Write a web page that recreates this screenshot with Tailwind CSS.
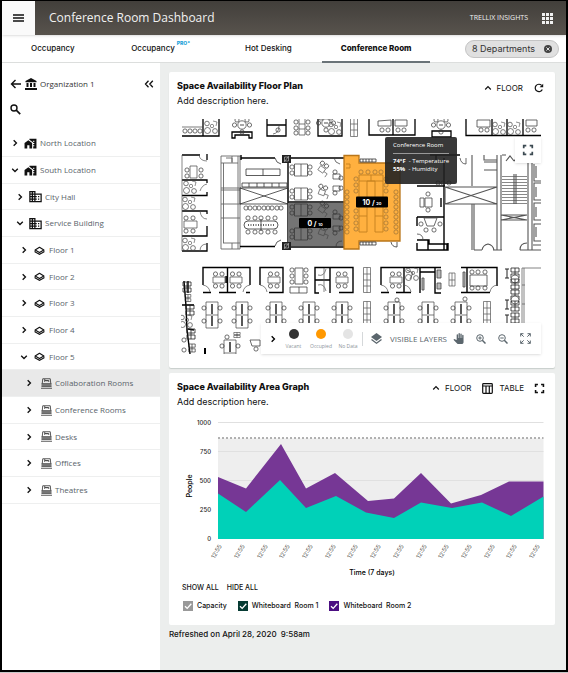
<!DOCTYPE html>
<html lang="en">
<head>
<meta charset="utf-8">
<meta name="viewport" content="width=device-width, initial-scale=1">
<title>Conference Room Dashboard</title>
<script src="https://cdn.jsdelivr.net/npm/@tailwindcss/browser@4"></script>
</head>
<body class="bg-[#c9c9c9] pb-px font-['Inter',sans-serif] text-[8px] text-[#111]">
<svg width="0" height="0" class="absolute" aria-hidden="true">
  <defs>
    <symbol id="i-right" viewBox="0 0 12 12"><path d="M4 1.800 8.200 6 4 10.200" fill="none" stroke="currentColor" stroke-width="2"/></symbol>
    <symbol id="i-down" viewBox="0 0 12 12"><path d="M1.800 4 6 8.200 10.200 4" fill="none" stroke="currentColor" stroke-width="2"/></symbol>
    <symbol id="i-up" viewBox="0 0 12 12"><path d="M1.800 8.200 6 4l4.200 4.200" fill="none" stroke="currentColor" stroke-width="1.800"/></symbol>
    <symbol id="i-location" viewBox="0 0 24 24"><path fill="currentColor" d="M1 11v10h5v-6h4v6h5V11L8 6z"/><path fill="currentColor" d="M10 3v1.970l7 5V11h2v2h-2v2h2v2h-2v4h6V3H10zm9 6h-2V7h2v2z"/></symbol>
    <symbol id="i-building" viewBox="0 0 24 24"><path fill="currentColor" d="M12 7V3H2v18h20V7H12zM6 19H4v-2h2v2zm0-4H4v-2h2v2zm0-4H4V9h2v2zm0-4H4V5h2v2zm4 12H8v-2h2v2zm0-4H8v-2h2v2zm0-4H8V9h2v2zm0-4H8V5h2v2zm10 12h-8v-2h2v-2h-2v-2h2v-2h-2V9h8v10zm-2-8h-2v2h2v-2zm0 4h-2v2h2v-2z"/></symbol>
    <symbol id="i-floor" viewBox="0 0 20 16"><path d="M10 2 18 7 10 11.500 2 7z" fill="none" stroke="currentColor" stroke-width="2" stroke-linejoin="round"/><path d="M2 8v2.500l8 4.500 8-4.500V8" fill="none" stroke="currentColor" stroke-width="2"/></symbol>
    <symbol id="i-room" viewBox="0 0 22 22"><path d="M2.500 11 3.500 1.500h15l1 9.500M7.500 2v6M7.500 5h8v3M12 5v2" fill="none" stroke="#222" stroke-width="1.500"/><path d="M1 11.500h20V17H1z" fill="#8a8a8a"/><path d="M1 11.500h20M1 16.500h20M0 20.500h22" stroke="#222" stroke-width="1.500"/></symbol>
    <symbol id="i-expand" viewBox="0 0 14 14"><path d="M2 5V2h3M9 2h3v3M12 9v3H9M5 12H2V9" fill="none" stroke="currentColor" stroke-width="2"/></symbol>
  </defs>
</svg>

<div class="flex min-h-[calc(100vh-1px)] flex-col border-2 border-t border-black bg-white">
  <header class="relative z-10 flex h-[34px] items-center bg-linear-to-b from-[#423f3b] to-[#58534d] font-['Open_Sans',sans-serif] text-[#f1f1f1] shadow">
    <button class="grid h-[34px] w-[33px] place-items-center bg-[#fafafa] text-[#111]" aria-label="Menu">
      <svg class="h-2 w-[11px]" viewBox="0 0 11 8"><path d="M0 1h11M0 4h11M0 7h11" stroke="currentColor" stroke-width="1.400"/></svg>
    </button>
    <h1 class="ml-[14px] text-[12px] font-medium">Conference Room Dashboard</h1>
    <span class="ml-auto text-[7px] font-medium">TRELLIX INSIGHTS</span>
    <button class="ml-[14px] mr-[13px]" aria-label="Apps">
      <svg class="size-[11px]" viewBox="0 0 11 11" fill="currentColor"><path d="M0 0h3v3H0zM4 0h3v3H4zM8 0h3v3H8zM0 4h3v3H0zM4 4h3v3H4zM8 4h3v3H8zM0 8h3v3H0zM4 8h3v3H4zM8 8h3v3H8z"/></svg>
    </button>
  </header>

  <div class="flex h-7 items-center justify-between border-b border-[#dcdedd] pr-[7px]">
    <nav class="-ml-[3px] flex h-7 w-[431px] text-[8px] font-medium">
      <a href="#" class="flex flex-1 items-center justify-center pb-[2px]">Occupancy</a>
      <a href="#" class="flex flex-1 items-center justify-center gap-[2px] pb-[2px]">Occupancy<sup class="mb-1 text-[5px] font-extrabold text-[#1b9fd8]">PRO*</sup></a>
      <a href="#" class="flex flex-1 items-center justify-center pb-[2px]">Hot Desking</a>
      <a href="#" class="flex flex-1 items-center justify-center border-b-2 border-[#6a7378] font-extrabold" aria-current="page">Conference Room</a>
    </nav>
    <button class="flex h-[18px] w-[94px] items-center justify-between rounded-full border border-[#c4c4c4] bg-[#e0e0e0] px-[6px] text-[9px] text-[#333]">8 Departments
      <svg class="size-2" viewBox="0 0 8 8"><circle cx="4" cy="4" r="4" fill="#444"/><path d="m2.400 2.400 3.200 3.200M5.600 2.400 2.400 5.600" stroke="#e0e0e0"/></svg>
    </button>
  </div>

  <div class="flex flex-1">
    <aside class="w-[158px] shrink-0 font-['Open_Sans',sans-serif] text-[#59636a]">
      <div class="flex h-[41px] items-center pl-2 pr-[6px] text-[#111]">
        <button aria-label="Back"><svg class="h-[10px] w-[11px]" viewBox="0 0 11 10"><path d="M11 5H1.500M5.500 1l-4 4 4 4" fill="none" stroke="currentColor" stroke-width="1.400"/></svg></button>
        <svg class="ml-1 h-3 w-3" viewBox="0 0 12 12" fill="currentColor"><path d="M6 0 .5 3v1.200h11V3zM1.500 5h2v4h-2zM5 5h2v4H5zM8.500 5h2v4h-2zM0 10h12v2H0z"/></svg>
        <span class="ml-[3px] text-[8px] text-[#333]">Organization 1</span>
        <button class="ml-auto" aria-label="Collapse"><svg class="h-2 w-[10px]" viewBox="0 0 10 8"><path d="M4.500.8 1.500 4l3 3.200M8.800.8l-3 3.200 3 3.200" fill="none" stroke="currentColor" stroke-width="1.300"/></svg></button>
      </div>
      <div class="flex h-[26px] items-start pl-2 text-[#111]">
        <button aria-label="Search"><svg class="size-[11px]" viewBox="0 0 11 11"><circle cx="4" cy="4" r="3" fill="none" stroke="currentColor" stroke-width="1.400"/><path d="m6.200 6.200 4 4" stroke="currentColor" stroke-width="1.700"/></svg></button>
      </div>
      <ul class="[&>li]:h-[27px] [&>li:nth-child(3n)]:h-[26px] [&>li]:border-b [&>li]:border-[#eeefef] [&_button]:flex [&_button]:size-full [&_button]:items-center [&_svg]:text-[#111]">
        <li><button class="pl-[9px]"><svg class="size-2"><use href="#i-right"/></svg><svg class="ml-[5px] mr-[3px] size-[13px]"><use href="#i-location"/></svg>North Location</button></li>
        <li><button class="pl-[9px]"><svg class="size-2"><use href="#i-down"/></svg><svg class="ml-[5px] mr-[3px] size-[13px]"><use href="#i-location"/></svg>South Location</button></li>
        <li><button class="pl-[14px]"><svg class="size-2"><use href="#i-right"/></svg><svg class="ml-1 mr-[2px] size-[15px]"><use href="#i-building"/></svg>City Hall</button></li>
        <li><button class="pl-[14px]"><svg class="size-2"><use href="#i-down"/></svg><svg class="ml-1 mr-[2px] size-[15px]"><use href="#i-building"/></svg>Service Building</button></li>
        <li><button class="pl-[18px]"><svg class="size-2"><use href="#i-right"/></svg><svg class="ml-[6px] mr-1 h-[9px] w-[11px]"><use href="#i-floor"/></svg>Floor 1</button></li>
        <li><button class="pl-[18px]"><svg class="size-2"><use href="#i-right"/></svg><svg class="ml-[6px] mr-1 h-[9px] w-[11px]"><use href="#i-floor"/></svg>Floor 2</button></li>
        <li><button class="pl-[18px]"><svg class="size-2"><use href="#i-right"/></svg><svg class="ml-[6px] mr-1 h-[9px] w-[11px]"><use href="#i-floor"/></svg>Floor 3</button></li>
        <li><button class="pl-[18px]"><svg class="size-2"><use href="#i-right"/></svg><svg class="ml-[6px] mr-1 h-[9px] w-[11px]"><use href="#i-floor"/></svg>Floor 4</button></li>
        <li><button class="pl-[18px]"><svg class="size-2"><use href="#i-down"/></svg><svg class="ml-[6px] mr-1 h-[9px] w-[11px]"><use href="#i-floor"/></svg>Floor 5</button></li>
        <li class="bg-[#e9e9e9]"><button class="pl-[23px]"><svg class="size-2"><use href="#i-right"/></svg><svg class="ml-[8px] mr-[3px] size-[11px]"><use href="#i-room"/></svg>Collaboration Rooms</button></li>
        <li><button class="pl-[23px]"><svg class="size-2"><use href="#i-right"/></svg><svg class="ml-[8px] mr-[3px] size-[11px]"><use href="#i-room"/></svg>Conference Rooms</button></li>
        <li><button class="pl-[23px]"><svg class="size-2"><use href="#i-right"/></svg><svg class="ml-[8px] mr-[3px] size-[11px]"><use href="#i-room"/></svg>Desks</button></li>
        <li><button class="pl-[23px]"><svg class="size-2"><use href="#i-right"/></svg><svg class="ml-[8px] mr-[3px] size-[11px]"><use href="#i-room"/></svg>Offices</button></li>
        <li><button class="pl-[23px]"><svg class="size-2"><use href="#i-right"/></svg><svg class="ml-[8px] mr-[3px] size-[11px]"><use href="#i-room"/></svg>Theatres</button></li>
      </ul>
    </aside>

    <main class="min-w-0 flex-1 bg-[#eceeed] pl-[9px] pr-[11px] pt-[9px]">
      <section class="rounded-[2px] bg-white pb-[14px] pt-2 shadow-[0_1px_1px_#c8cecb]">
        <div class="flex items-start justify-between px-2">
          <div>
            <h2 class="text-[9px] leading-3 font-extrabold">Space Availability Floor Plan</h2>
            <p class="mt-[3px] text-[9px] leading-3">Add description here.</p>
          </div>
          <div class="flex h-4 items-center text-[8px]">
            <button class="flex items-center gap-[5px]"><svg class="size-2"><use href="#i-up"/></svg>FLOOR</button>
            <button class="ml-[11px] mr-[3px]" aria-label="Refresh"><svg class="size-[10px]" viewBox="0 0 10 10"><path d="M8.300 6.500A3.700 3.700 0 1 1 7.600 2.400" fill="none" stroke="currentColor" stroke-width="1.200"/><path d="M9.200.7v3.600H5.600z" fill="currentColor"/></svg></button>
          </div>
        </div>

        <div class="relative ml-3 mr-[14px] mt-3">
          <svg class="block w-full" viewBox="181 119 360 235" role="img" aria-label="Floor plan">
            <defs>
              <circle id="c" r="2.100" fill="none" stroke="#333" stroke-width=".7"/>
              <g id="pod"><path d="M-6-13H6V13H-6zM-6 0H6" fill="none" stroke="#444" stroke-width=".7"/><path d="M0-11V-1M0 1V11" stroke="#000" stroke-width="1.300"/><use href="#c" x="-8" y="-7"/><use href="#c" x="8" y="-7"/><use href="#c" x="-8" y="6"/><use href="#c" x="8" y="6"/></g>
              <g id="meet"><path d="M-6-3H6V3H-6z" fill="none" stroke="#444" stroke-width=".7"/><use href="#c" x="-3.500" y="-6"/><use href="#c" x="3" y="-6"/><use href="#c" x="-3.500" y="6"/><use href="#c" x="3" y="6"/></g>
              <g id="four"><path d="M-6.500-6H6.500V6H-6.500zM0-6V6" fill="none" stroke="#333" stroke-width=".7"/><use href="#c" x="-9" y="-3"/><use href="#c" x="9" y="-3"/><use href="#c" x="-9" y="3"/><use href="#c" x="9" y="3"/></g>
              <g id="round"><circle r="4.200" fill="none" stroke="#333" stroke-width=".7"/><path d="M-2 0H2" stroke="#222" stroke-width=".8"/><use href="#c" x="-7.500"/><use href="#c" x="7.500"/><use href="#c" x="-5" y="-5"/><use href="#c" x="5" y="-5"/><use href="#c" y="7"/></g>
              <g id="lounge"><circle cx="-3.500" cy="3.500" r="3" fill="none" stroke="#444" stroke-width=".7"/><circle cx="4" cy="4" r="2.400" fill="none" stroke="#444" stroke-width=".7"/><circle cx="-4" cy="-3.500" r="2.300" fill="none" stroke="#444" stroke-width=".7"/><circle cx="1" cy="-1" r="1.700" fill="none" stroke="#444" stroke-width=".6"/><path d="m2-6 4 1-1 4" fill="none" stroke="#444" stroke-width=".6"/></g>
              <g id="rack"><path d="M-3.500-12.500H3.500V12.500H-3.500zM0-12.500V12.500M-3.500-6H3.500M-3.500 0H3.500M-3.500 6H3.500" fill="none" stroke="#555" stroke-width=".7"/></g>
              <g id="solo"><path d="M-3-2H3V3H-3zM3 1H7V5" fill="none" stroke="#444" stroke-width=".6"/><use href="#c" x="-3" y="-5"/><use href="#c" x="2" y="-5"/></g>
              <g id="work"><use href="#four" x="301" y="170"/><use href="#four" x="301" y="194"/><use href="#solo" transform="translate(322 169) rotate(35)"/><use href="#solo" transform="translate(322 192) rotate(20)"/><path d="M333 174h7v5h-7zM333 186h7v5h-7z" fill="none" stroke="#333" stroke-width=".7"/><use href="#c" x="335" y="172"/><use href="#c" x="341" y="178"/><use href="#c" x="341" y="188"/><use href="#c" x="335" y="193"/></g>
              <g id="booth"><path d="M-4-5H4V-1H-4zM-4 1H4V5H-4zM0-5V5" fill="none" stroke="#222" stroke-width=".8"/></g>
              <g id="col"><path d="M0 0h9v8H0z" fill="#222"/><path d="M2.500 2h4v4h-4zM2 7l5-6" fill="none" stroke="#ccc" stroke-width=".6"/></g>
            </defs>

            <!-- north offices -->
            <g fill="none" stroke="#000" stroke-width="1.300">
              <path d="M182 136h37V119M203 119v17M232 138v-6h20v6h-3v-3h-14v3zM267 119v17h19V119M267 125h19M318 119v17h24V119M369 119v16h46V119M393 119v16M432 137v-6h19v6zM466 119v16.500h75M492 119v16M507 119v16M523 119v16"/>
              <path d="M182 127h21M273 134q6-1 6-8" stroke="#444" stroke-width=".7"/>
            </g>
            <use href="#c" x="185" y="131"/><use href="#c" x="190" y="131"/><use href="#c" x="195" y="131"/><use href="#c" x="200" y="131"/>
            <use href="#lounge" x="211" y="127"/><use href="#round" x="242" y="125"/><use href="#c" x="278" y="130"/>
            <path d="M299 119v16h6v-16M299 124h6M299 129h6" fill="none" stroke="#444" stroke-width=".7"/>
            <use href="#c" x="296" y="122"/><use href="#c" x="296" y="128"/><use href="#c" x="296" y="133"/><use href="#c" x="308" y="122"/><use href="#c" x="308" y="128"/><use href="#c" x="308" y="133"/>
            <use href="#round" x="326" y="123"/><use href="#lounge" x="335" y="128"/><use href="#rack" x="354" y="124"/>
            <g fill="none" stroke="#444" stroke-width=".8"><path d="M378 121l13-1v6h-13zM395 120h12v6h-12zM477 120h13v7h-13zM526 120h11v6h-11z"/></g>
            <use href="#c" x="382" y="130"/><use href="#c" x="388" y="130"/><use href="#c" x="398" y="130"/><use href="#c" x="404" y="130"/><use href="#c" x="481" y="130"/><use href="#c" x="487" y="130"/><use href="#c" x="528" y="130"/><use href="#c" x="534" y="130"/>
            <use href="#round" x="441" y="125"/><use href="#lounge" x="499" y="128"/><use href="#lounge" x="514" y="128"/>

            <!-- west offices -->
            <g fill="none" stroke="#000" stroke-width="1.300">
              <path d="M182 155h18M207 154v6M182 180h25v3M207 192v3.500h-25M182 211h25v3M207 226v10h-25M182 251h25v-8"/>
              <path d="M182 155v96M199 155q1 6 8 6M200 191q2-6 7-7M200 211q1 8 7 8M200 251q0-7 7-7" stroke="#555" stroke-width=".7"/>
            </g>
            <path d="M190 166h7v12h-7zM184 221h13v7h-13z" fill="none" stroke="#444" stroke-width=".7"/>
            <use href="#c" x="187" y="170"/><use href="#c" x="187" y="176"/><use href="#c" x="201" y="170"/><use href="#c" x="201" y="176"/>
            <use href="#lounge" x="190" y="187"/><use href="#lounge" x="189" y="203"/><use href="#lounge" x="189" y="244"/>
            <use href="#c" x="186" y="218"/><use href="#c" x="193" y="218"/><use href="#c" x="186" y="231"/><use href="#c" x="193" y="231"/>

            <!-- west core -->
            <g fill="none" stroke="#666" stroke-width=".9"><path d="M221 156h19v93h-19M221 156v93M223.500 163v80M238 156v93M221 163h17M221 188h19M221 190h19M221 204h19M221 218h19M223 243h17M232 156v7M232 243v6M226 158h6v4"/></g>

            <!-- training room -->
            <g fill="none" stroke="#000" stroke-width="1.400"><path d="M241 155v5M241 158h34M240 246.500h35M288 158h56M288 158v89M288 202h56M288 247h56"/></g>
            <g fill="none" stroke="#333" stroke-width=".8"><path d="M246 169h34v6.500h-34zM263 169v6.500M242 183h45v4h-45zM249 183v4M257 183v4M264 183v4M272 183v4M279 183v4M240 188h48v16h-48zM240 188l48 16M240 204l48-16M275 158q1 5 6 6M275 246q1-5 6-6"/><rect x="244" y="221" width="34" height="8" rx="4"/><path d="M248 225h26" stroke-dasharray="1 1.500" stroke-width="1.500"/><path d="M261 219v12"/></g>
            <use href="#c" x="246" y="208"/><use href="#c" x="250" y="208"/><use href="#c" x="255" y="208"/><use href="#c" x="259" y="208"/><use href="#c" x="264" y="208"/><use href="#c" x="268" y="208"/><use href="#c" x="272" y="208"/><use href="#c" x="277" y="208"/><use href="#c" x="281" y="208"/>
            <use href="#c" x="248" y="218"/><use href="#c" x="255" y="218"/><use href="#c" x="261" y="218"/><use href="#c" x="268" y="218"/><use href="#c" x="275" y="218"/><use href="#c" x="248" y="232"/><use href="#c" x="255" y="232"/><use href="#c" x="261" y="232"/><use href="#c" x="268" y="232"/><use href="#c" x="275" y="232"/>

            <!-- collaboration rooms -->
            <path d="M288 203h56v43h-56z" fill="#747474"/>
            <use href="#work"/><use href="#work" y="40"/>
            <use href="#col" x="282" y="155"/><use href="#col" x="282" y="242"/>
            <path d="M334 158q1 5 6 6M336 247q0-6 6-6" fill="none" stroke="#333" stroke-width=".7"/>

            <!-- occupied room -->
            <path d="M344 155.500h15v7.500h41v78h-41v8h-15z" fill="#ffb03f" stroke="#b9761a" stroke-width="1.300"/>
            <path d="M360 159h16v3h-16zM363 159v3M366 159v3M369 159v3M372 159v3M360 242h16v3h-16zM363 242v3M366 242v3M369 242v3M372 242v3M391 242q1 5 6 5v-5" fill="none" stroke="#333" stroke-width=".8"/>
            <g opacity=".5">
              <path d="M359 175h24v57h-8v-51h-8v51h-8zM371 175v6M359 181h24M359 198h8M359 216h8M375 198h8M375 216h8M346 164h4v4h-4" fill="none" stroke="#8a5200" stroke-width=".9"/>
              <use href="#c" x="361" y="172"/><use href="#c" x="368" y="172"/><use href="#c" x="375" y="172"/><use href="#c" x="381" y="172"/>
              <use href="#c" x="356" y="179"/><use href="#c" x="356" y="185"/><use href="#c" x="356" y="191"/><use href="#c" x="356" y="211"/><use href="#c" x="356" y="217"/><use href="#c" x="356" y="223"/><use href="#c" x="356" y="229"/>
              <use href="#c" x="386" y="179"/><use href="#c" x="386" y="185"/><use href="#c" x="386" y="191"/><use href="#c" x="386" y="211"/><use href="#c" x="386" y="217"/><use href="#c" x="386" y="223"/><use href="#c" x="386" y="229"/>
              <use href="#c" x="347" y="192"/><use href="#c" x="347" y="197"/><use href="#c" x="347" y="202"/><use href="#c" x="347" y="207"/><use href="#c" x="347" y="212"/><use href="#c" x="347" y="217"/><use href="#c" x="347" y="222"/><use href="#c" x="347" y="227"/><use href="#c" x="347" y="232"/>
              <use href="#c" x="396" y="192"/><use href="#c" x="396" y="197"/><use href="#c" x="396" y="202"/><use href="#c" x="396" y="207"/><use href="#c" x="396" y="212"/><use href="#c" x="396" y="217"/><use href="#c" x="396" y="222"/><use href="#c" x="396" y="227"/><use href="#c" x="396" y="232"/>
            </g>
            <g fill="#000"><rect x="299" y="218" width="32" height="10" rx="1"/><rect x="356" y="196.500" width="32" height="11" rx="1"/></g>
            <g fill="#fff" font-weight="700" font-size="7" text-anchor="middle"><text x="315" y="225.500">0 / <tspan font-size="4">10</tspan></text><text x="372" y="204.500">10 / <tspan font-size="4">20</tspan></text></g>

            <!-- east offices -->
            <g fill="none" stroke="#000" stroke-width="1.400"><path d="M417 186h28M444 158v92M417 217h27M417 217v9M417 243v7h30v-6h-18v-4h-12M428 240v10M448 243v7h-4M430 155h30M436 155v7M441 198v9"/></g>
            <g fill="none" stroke="#444" stroke-width=".8"><path d="M425 198h7v9h-7zM420 198h4v9h-4zM424 218h13l-3 8h-7zM417 234q6 0 6 6M460 158q1 6 6 6v-6"/></g>
            <use href="#c" x="428" y="194"/><use href="#c" x="428" y="210"/><use href="#c" x="421" y="224"/><use href="#c" x="440" y="224"/><use href="#c" x="426" y="230"/><use href="#c" x="434" y="230"/><use href="#c" x="438" y="183"/><use href="#c" x="443" y="183"/><use href="#c" x="449" y="183"/>

            <!-- east core -->
            <g fill="none" stroke="#555" stroke-width="1.100">
              <path d="M445 187h52v17h-52zM445 187l52 17M445 204l52-17M472 155v31M472 204v46M474 204v46M474 250h8M493 250h9M497 155v95M501 155v95M484 155v5h13M484 162h13M484 170h13M482 250q1-5 6-6 5 1 6 6M502 155h4M506 161l4-5 4 5M514 161l5-5M501 215h26M501 220h26M501 215l26 5M501 220l26-5M514 174v30M516 174v30M528 160v90M532 160v90M520 250h21M520 250q0-7 7-7"/>
              <path d="M502 176.500h25M502 179.500h25M502 182.500h25M502 185.500h25M502 188.500h25M502 191.500h25M502 194.500h25M502 197.500h25M502 200.500h25M502 203.500h25" stroke-width=".7"/>
              <path d="M541 181h-7v-17M541 183h-7v17h7M541 203h-7v17h7M541 224h-7v17h7M541 245h-8M536 166v12M536 187v10M536 207v10M536 227v10"/>
            </g>

            <!-- south offices -->
            <g fill="none" stroke="#000" stroke-width="1.400">
              <path d="M203 285v-17.500h47V285M227.500 267v26M203 292.500h8M219 292.500h17M246 292.500h4M260 285V267.500h23v25h-14M315 285V267.500h38v25h-14M330 267v26M315 280h15M315 285v8h4M381 285v-17.500h60M404 267v26M381 292.500h8M396 292.500h15M420 267v26M420 272h15M435 267v26h6M461 267.500h36V286M467 267v26M461 292.500h29M226 276v7"/>
              <path d="M203 285q6 1 7 7M250 285q-6 1-7 7M260 285q6 1 7 7M381 285q6 1 7 7M497 285q-6 1-7 7M404 285q6 1 7 7M318 285q6-2 8 6M318 275q6 2 8-6M324 268v12M324 280v12" stroke="#555" stroke-width=".7"/>
            </g>
            <use href="#meet" x="219" y="280"/><use href="#meet" x="236" y="280"/><use href="#meet" x="274" y="280"/><use href="#meet" x="342" y="280"/><use href="#meet" x="396" y="280"/>
            <path d="M295 268h8v16h-8zM290 287h17v6h-17zM299 287v6M470 275h17v11h-17zM407 270l6 3-3 6" fill="none" stroke="#444" stroke-width=".8"/>
            <use href="#c" x="292" y="270"/><use href="#c" x="292" y="276"/><use href="#c" x="292" y="282"/><use href="#c" x="306" y="270"/><use href="#c" x="306" y="276"/><use href="#c" x="306" y="282"/>
            <use href="#c" x="472" y="272"/><use href="#c" x="478" y="272"/><use href="#c" x="485" y="272"/><use href="#c" x="472" y="288"/><use href="#c" x="478" y="288"/><use href="#c" x="485" y="288"/>
            <use href="#lounge" x="412" y="274"/><use href="#rack" x="367" y="280"/><path d="M449 273h6v13h-6zM452 273v13M449 280h6" fill="none" stroke="#555" stroke-width=".7"/>
            <path d="M437 270h4v8h-4zM437 283h4v6h-4zM422 278h2v12h-2zM463 272h2v15h-2z" fill="#bbb" stroke="#444" stroke-width=".8"/>

            <!-- south desks -->
            <use href="#pod" x="212" y="315"/><use href="#pod" x="242" y="315"/><use href="#pod" x="276" y="315"/><use href="#pod" x="309" y="315"/><use href="#pod" x="342" y="315"/><use href="#pod" x="394" y="315"/><use href="#pod" x="428" y="315"/><use href="#pod" x="461" y="315"/>
            <use href="#rack" x="367" y="314"/><use href="#rack" x="487" y="314"/><use href="#c" x="397" y="300"/><use href="#c" x="465" y="299"/>
            <use href="#pod" x="230" y="353"/><use href="#c" x="227" y="337"/><use href="#booth" transform="translate(237 335) scale(.8 .5)"/><path d="M205 348v6" stroke="#000" stroke-width="2"/><path d="M250 340h10v6h-8z" fill="none" stroke="#444" stroke-width=".8"/><use href="#c" x="256" y="349"/>

            <!-- east booths -->
            <use href="#booth" x="515" y="273"/><circle cx="515" cy="279" r="4" fill="#fff" stroke="#555" stroke-width=".8"/><use href="#booth" x="515" y="284"/><use href="#booth" x="515" y="295"/><circle cx="515" cy="300" r="4" fill="#fff" stroke="#555" stroke-width=".8"/><use href="#booth" x="515" y="306"/><use href="#booth" x="515" y="318"/>
            <path d="M505 269h4M507 269v9M505 278h4M505 300h4M507 300v9M505 309h4M505 315h4M507 315v8" stroke="#222" fill="none"/><path d="M541 268h-19v55M524 268v55M522 285h3M522 304h3" fill="none" stroke="#666" stroke-width=".8"/>

            <!-- west lounge -->
            <path d="M184 281l2 25 1 24 3 24M188 281v12M182 305h12M188 329l6 1" stroke="#000" stroke-width="1.400" fill="none"/>
            <use href="#booth" x="187" y="287"/><use href="#booth" transform="translate(188 298) scale(.7)"/><use href="#booth" x="190" y="310"/><use href="#lounge" x="186" y="321"/><use href="#booth" x="191" y="334"/><use href="#booth" transform="translate(192 348) scale(.8)"/><use href="#c" x="184" y="340"/><use href="#c" x="184" y="350"/>
          </svg>

          <div class="absolute left-[204px] top-[18px] w-[72px] rounded-[2px] bg-[#222]/90 px-2 pb-[11px] pt-1 font-['Open_Sans',sans-serif] text-[6px] leading-[8px] text-white" role="tooltip">
            <p class="border-b border-[#999] pb-1 whitespace-nowrap">Conference Room</p>
            <p class="pt-[3px] whitespace-nowrap"><b>74°F</b>&nbsp; - Temperature</p>
            <p class="whitespace-nowrap"><b>55%</b>&nbsp; - Humidity</p>
          </div>
          <button class="absolute right-0 top-[18px] grid size-[26px] place-items-center bg-white text-[#3c4a52] shadow" aria-label="Full screen"><svg class="size-3"><use href="#i-expand"/></svg></button>

          <div class="absolute bottom-0 right-0 flex h-[31px] w-[280px] items-center bg-white pl-2 pr-[10px] font-['Open_Sans',sans-serif] text-[#5b666d] shadow">
            <button class="text-black" aria-label="Collapse legend"><svg class="size-2"><use href="#i-right"/></svg></button>
            <ul class="ml-2 flex text-[5px] leading-[6px] text-[#8b9398]">
              <li class="flex w-[17px] flex-col items-center gap-1"><span class="size-[10px] rounded-full bg-[#333]"></span>Vacant</li>
              <li class="flex w-[38px] flex-col items-center gap-1"><span class="size-[10px] rounded-full bg-[#ff9800]"></span>Occupied</li>
              <li class="flex w-[16px] flex-col items-center gap-1 whitespace-nowrap"><span class="size-[10px] rounded-full bg-[#e4e4e4]"></span>No Data</li>
            </ul>
            <span class="ml-auto h-[14px] w-px bg-[#d5d8da]"></span>
            <button class="ml-2 flex items-center gap-2 whitespace-nowrap text-[8px]"><svg class="size-[11px]" viewBox="0 0 11 11"><path d="M5.500 0 11 4 5.500 8 0 4z" fill="currentColor"/><path d="m.5 6.500 5 3.700 5-3.700" fill="none" stroke="currentColor" stroke-width="1.300"/></svg>VISIBLE LAYERS</button>
            <button class="ml-[6px]" aria-label="Pan"><svg class="size-[11px]" viewBox="0 0 24 24" fill="currentColor"><path d="M23 5.500V20c0 2.200-1.800 4-4 4h-7.300c-1.080 0-2.100-.43-2.850-1.190L1 14.830s1.260-1.230 1.300-1.250c.22-.19.49-.29.79-.29.22 0 .42.060.6.160L8 15.500V4a1.500 1.500 0 0 1 3 0v7h1V1.500a1.500 1.500 0 0 1 3 0V11h1V2.500a1.500 1.500 0 0 1 3 0V11h1V5.500a1.500 1.500 0 0 1 3 0z"/></svg></button>
            <button class="ml-3" aria-label="Zoom in"><svg class="size-[10px]" viewBox="0 0 10 10" fill="none" stroke="currentColor"><circle cx="4" cy="4" r="3.300"/><path d="m6.300 6.300 3.200 3.200" stroke-width="1.500"/><path d="M2.300 4h3.400M4 2.300v3.400"/></svg></button>
            <button class="ml-3" aria-label="Zoom out"><svg class="size-[10px]" viewBox="0 0 10 10" fill="none" stroke="currentColor"><circle cx="4" cy="4" r="3.300"/><path d="m6.300 6.300 3.200 3.200" stroke-width="1.500"/><path d="M2.300 4h3.400"/></svg></button>
            <button class="ml-3" aria-label="Fit to view"><svg class="size-[11px]" viewBox="0 0 11 11" fill="none" stroke="currentColor"><path d="M.7 3.500V.7h2.800M.7.7l3 3M7.500.7h2.800v2.800M10.300.7l-3 3M.7 7.500v2.800h2.800M.7 10.300l3-3M7.500 10.300h2.800V7.500M10.300 10.300l-3-3" stroke-width="1"/></svg></button>
          </div>
        </div>
      </section>

      <section class="mt-[5px] rounded-[2px] bg-white pb-[14px] pt-2">
        <div class="flex items-start justify-between px-2">
          <div>
            <h2 class="text-[9px] leading-3 font-extrabold">Space Availability Area Graph</h2>
            <p class="mt-[3px] text-[9px] leading-3">Add description here.</p>
          </div>
          <div class="flex h-[14px] items-center text-[8px]">
            <button class="flex items-center gap-[5px]"><svg class="size-2"><use href="#i-up"/></svg>FLOOR</button>
            <button class="ml-[11px] flex items-center gap-[6px]"><svg class="size-[11px]" viewBox="0 0 11 11" fill="none" stroke="currentColor" stroke-width="1.200"><rect x=".7" y=".7" width="9.600" height="9.600" rx=".8"/><path d="M.7 3h9.600M4 3v7M7.300 3v7"/></svg>TABLE</button>
            <button class="ml-[10px] mr-[2px]" aria-label="Full screen"><svg class="size-[11px]"><use href="#i-expand"/></svg></button>
          </div>
        </div>

        <svg class="mt-2 block w-full" viewBox="169 416 386 162" role="img" aria-label="People over time, 7 days">
          <path d="M218 438.500h325.500v100H218z" fill="#eee"/>
          <path d="M218 422.500h325.500M218 451.500h325.500M218 480.500h325.500M218 509.500h325.500" stroke="#e0e0e0"/>
          <path d="M218 438h325.500" stroke="#999" stroke-width="1.500" stroke-dasharray="2 2"/>
          <path d="M218 477 246 488.500 281 444 306 488.500 335 473 368 501 394 498.500 421 473 451 503.500 481 495 509 481.500H543.500V539H218z" fill="#763795"/>
          <path d="M218 493.500 246 512 280 480 306 508 336 496 366 512.500 394 518 421 502.500 452 508 482 502.500 511 516 543.500 496.500V539H218z" fill="#00d1b8"/>
          <g font-size="6" font-weight="500" fill="#222" text-anchor="end"><text x="211" y="425">1000</text><text x="211" y="454">750</text><text x="211" y="483">500</text><text x="211" y="512">250</text><text x="211" y="541">0</text></g>
          <text transform="translate(192 486) rotate(-90)" font-size="7" font-weight="500" text-anchor="middle">People</text>
          <g font-size="6" fill="#555" text-anchor="end">
            <text transform="translate(222 546) rotate(-60)">12:55</text><text transform="translate(245 546) rotate(-60)">12:55</text><text transform="translate(268 546) rotate(-60)">12:55</text><text transform="translate(290 546) rotate(-60)">12:55</text><text transform="translate(313 546) rotate(-60)">12:55</text><text transform="translate(336 546) rotate(-60)">12:55</text><text transform="translate(358 546) rotate(-60)">12:55</text><text transform="translate(381 546) rotate(-60)">12:55</text><text transform="translate(404 546) rotate(-60)">12:55</text><text transform="translate(427 546) rotate(-60)">12:55</text><text transform="translate(449 546) rotate(-60)">12:55</text><text transform="translate(472 546) rotate(-60)">12:55</text><text transform="translate(495 546) rotate(-60)">12:55</text><text transform="translate(517 546) rotate(-60)">12:55</text><text transform="translate(540 546) rotate(-60)">12:55</text>
          </g>
          <text x="372" y="575" font-size="7" font-weight="500" text-anchor="middle">Time (7 days)</text>
        </svg>

        <div class="mt-1 flex gap-2 pl-[13px] text-[7px] leading-3 font-medium"><button>SHOW ALL</button><button>HIDE ALL</button></div>
        <div class="mt-[6px] flex items-center gap-[11px] pl-[14px] text-[7px] leading-[11px] font-medium">
          <label class="flex items-center gap-1"><span class="grid"><input type="checkbox" checked class="col-start-1 row-start-1 size-[10px] appearance-none bg-[#999]"><svg class="pointer-events-none col-start-1 row-start-1 size-[10px]" viewBox="0 0 10 10"><path d="m2 5.200 2.200 2.200L8.300 2.800" fill="none" stroke="#fff" stroke-width="1.300"/></svg></span>Capacity</label>
          <label class="flex items-center gap-1"><span class="grid"><input type="checkbox" checked class="col-start-1 row-start-1 size-[10px] appearance-none bg-[#063b33]"><svg class="pointer-events-none col-start-1 row-start-1 size-[10px]" viewBox="0 0 10 10"><path d="m2 5.200 2.200 2.200L8.300 2.800" fill="none" stroke="#fff" stroke-width="1.300"/></svg></span>Whiteboard&nbsp; Room 1</label>
          <label class="flex items-center gap-1"><span class="grid"><input type="checkbox" checked class="col-start-1 row-start-1 size-[10px] appearance-none bg-[#4b0f82]"><svg class="pointer-events-none col-start-1 row-start-1 size-[10px]" viewBox="0 0 10 10"><path d="m2 5.200 2.200 2.200L8.300 2.800" fill="none" stroke="#fff" stroke-width="1.300"/></svg></span>Whiteboard&nbsp; Room 2</label>
        </div>
      </section>
      <p class="mt-[3px] text-[8px] leading-3 font-medium">Refreshed on April 28, 2020&nbsp; 9:58am</p>
    </main>
  </div>
</div>
</body>
</html>
